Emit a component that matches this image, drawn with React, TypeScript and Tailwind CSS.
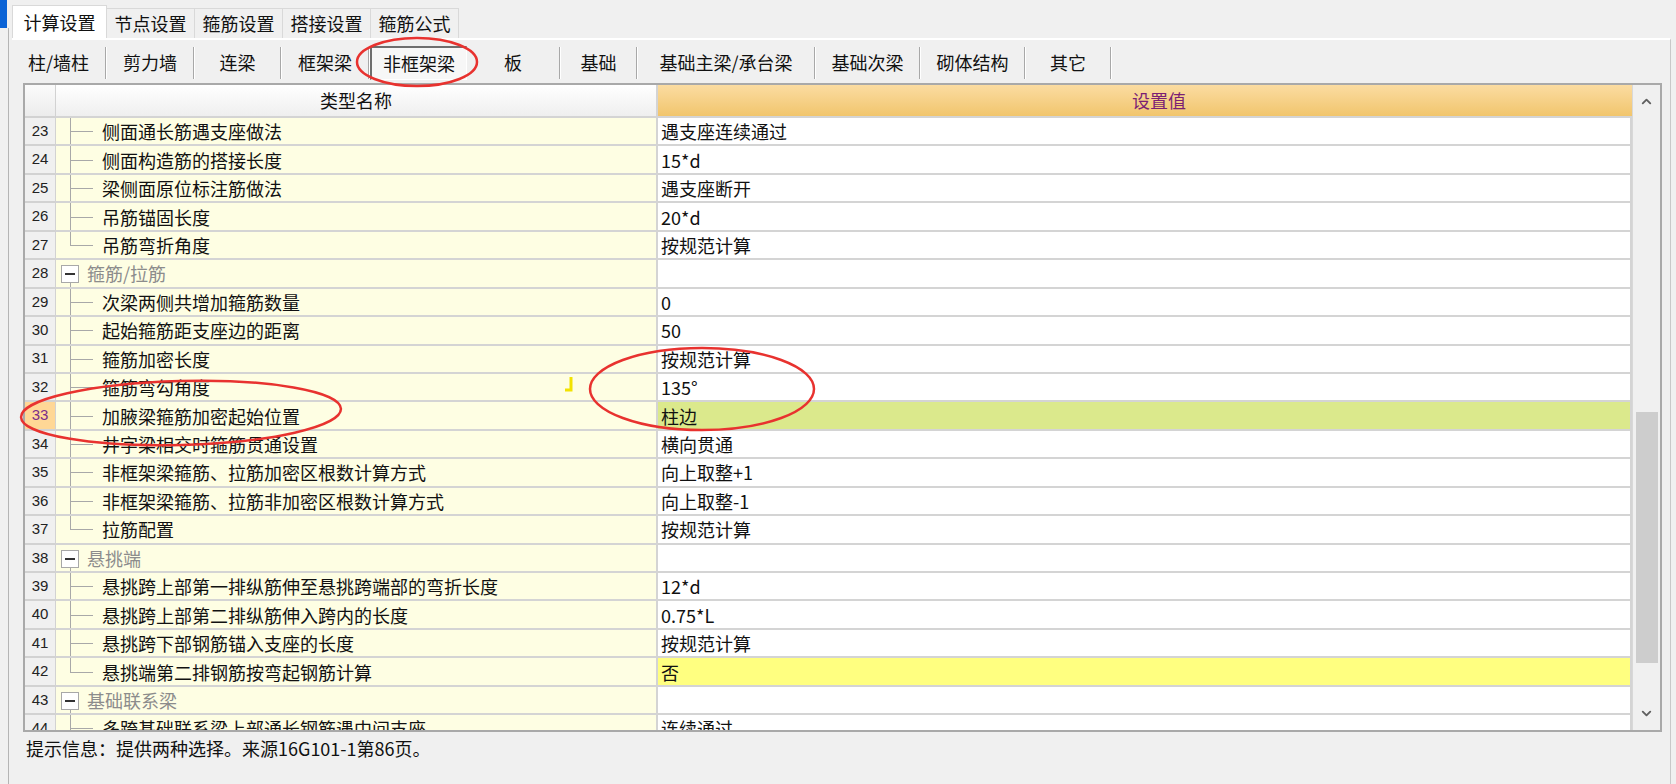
import { ChevronUp, ChevronDown } from "lucide-react";

type Row = {
  n: number;
  name: string;
  value?: string;
  group?: boolean;
  last?: boolean;
  tone?: "green" | "yellow";
  current?: boolean;
};

const rows: Row[] = [
  { n: 23, name: "侧面通长筋遇支座做法", value: "遇支座连续通过" },
  { n: 24, name: "侧面构造筋的搭接长度", value: "15*d" },
  { n: 25, name: "梁侧面原位标注筋做法", value: "遇支座断开" },
  { n: 26, name: "吊筋锚固长度", value: "20*d" },
  { n: 27, name: "吊筋弯折角度", value: "按规范计算", last: true },
  { n: 28, name: "箍筋/拉筋", group: true },
  { n: 29, name: "次梁两侧共增加箍筋数量", value: "0" },
  { n: 30, name: "起始箍筋距支座边的距离", value: "50" },
  { n: 31, name: "箍筋加密长度", value: "按规范计算" },
  { n: 32, name: "箍筋弯勾角度", value: "135°" },
  { n: 33, name: "加腋梁箍筋加密起始位置", value: "柱边", tone: "green", current: true },
  { n: 34, name: "井字梁相交时箍筋贯通设置", value: "横向贯通" },
  { n: 35, name: "非框架梁箍筋、拉筋加密区根数计算方式", value: "向上取整+1" },
  { n: 36, name: "非框架梁箍筋、拉筋非加密区根数计算方式", value: "向上取整-1" },
  { n: 37, name: "拉筋配置", value: "按规范计算", last: true },
  { n: 38, name: "悬挑端", group: true },
  { n: 39, name: "悬挑跨上部第一排纵筋伸至悬挑跨端部的弯折长度", value: "12*d" },
  { n: 40, name: "悬挑跨上部第二排纵筋伸入跨内的长度", value: "0.75*L" },
  { n: 41, name: "悬挑跨下部钢筋锚入支座的长度", value: "按规范计算" },
  { n: 42, name: "悬挑端第二排钢筋按弯起钢筋计算", value: "否", tone: "yellow", last: true },
  { n: 43, name: "基础联系梁", group: true },
  { n: 44, name: "多跨基础联系梁上部通长钢筋遇中间支座", value: "连续通过" },
];

const subTabs = [
  { label: "柱/墙柱", w: "w-[95px]" },
  { label: "剪力墙", w: "w-[88px]" },
  { label: "连梁", w: "w-[87px]" },
  { label: "框架梁", w: "w-[88px]" },
  { label: "非框架梁", w: "w-[97px]", active: true },
  { label: "板", w: "w-[94px]" },
  { label: "基础", w: "w-[77px]" },
  { label: "基础主梁/承台梁", w: "w-[178px]" },
  { label: "基础次梁", w: "w-[105px]" },
  { label: "砌体结构", w: "w-[105px]" },
  { label: "其它", w: "w-[86px]" },
];

function TreeLines({ row }: { row: Row }) {
  if (row.group) {
    return (
      <div className="relative w-[31px] h-full shrink-0">
        <div className="absolute left-[5px] top-[5px] w-[18px] h-[18px] border border-[#a8a8a8] bg-white flex items-center justify-center">
          <div className="w-[10px] h-[2px] bg-[#333]" />
        </div>
        <div className="absolute left-[14px] top-[23px] bottom-0 w-px bg-[#a8a8a8]" />
      </div>
    );
  }
  return (
    <div className="relative w-[46px] h-full shrink-0">
      <div className={`absolute left-[14px] top-0 w-px bg-[#a8a8a8] ${row.last ? "h-1/2" : "h-full"}`} />
      <div className="absolute left-[14px] top-1/2 w-[23px] h-px bg-[#a8a8a8]" />
    </div>
  );
}

function GridRow({ row }: { row: Row }) {
  const valueBg =
    row.tone === "green" ? "bg-[#dbe98c]" : row.tone === "yellow" ? "bg-[#ffff80]" : "bg-white";
  return (
    <div className="flex h-[28.45px] shrink-0">
      <div
        className={`w-[31px] shrink-0 flex items-center justify-center border-b-2 border-r border-[#d2d2d2] font-['Liberation_Sans',sans-serif] text-[15px] ${
          row.current ? "bg-[#ffd796] text-[#7a2d8a]" : "bg-[#f0f0f0] text-[#222]"
        }`}
      >
        {row.n}
      </div>
      <div className="w-[602px] shrink-0 flex items-center bg-[#fefee3] border-b-2 border-r-2 border-[#d4d4d4]">
        <TreeLines row={row} />
        <span className={`leading-[20px] whitespace-nowrap ${row.group ? "text-[#8c8c8c]" : "text-[#111]"}`}>
          {row.name}
        </span>
      </div>
      <div className={`w-[974px] shrink-0 flex items-center pl-[3px] border-b-2 border-r-2 border-[#d4d4d4] ${valueBg}`}>
        <span className="leading-[20px] whitespace-nowrap text-[#111]">{row.value}</span>
      </div>
    </div>
  );
}

export default function App() {
  return (
    <div className="relative w-[1676px] h-[784px] overflow-hidden bg-[#f0f0f0] flex font-['Noto_Sans_CJK_SC','Noto_Sans',sans-serif] text-[18px] text-[#111]">
      {/* left edge */}
      <div className="w-[12px] shrink-0 flex flex-col">
        <div className="w-[7px] h-[28px] bg-[#0a63d6]" />
        <div className="flex-1 w-[9px] border-r border-[#b4b4b4]" />
      </div>

      {/* main */}
      <div className="flex-1 flex flex-col mr-[5px]">
        {/* top tabs */}
        <div className="h-[38px] flex items-end shrink-0">
          <div className="h-[33px] w-[95px] bg-white border border-b-0 border-[#d9d9d9] flex items-center justify-center">
            计算设置
          </div>
          {["节点设置", "箍筋设置", "搭接设置", "箍筋公式"].map((t) => (
            <div
              key={t}
              className="h-[30px] w-[89px] -ml-px bg-[#f0f0f0] border border-b-0 border-[#d9d9d9] flex items-center justify-center"
            >
              {t}
            </div>
          ))}
        </div>

        {/* panel */}
        <div className="flex-1 flex flex-col border-t-2 border-t-white border-r border-r-[#c8c8c8] bg-[#f0f0f0]">
          {/* sub tabs */}
          <div className="h-[43px] flex items-center shrink-0 pt-[2px]">
            {subTabs.map((s) =>
              s.active ? (
                <div
                  key={s.label}
                  className={`${s.w} h-[34px] flex items-center justify-center border-t-2 border-l-2 border-[#6e6e6e] border-r border-b border-r-white border-b-white bg-[#f7f7f7]`}
                >
                  {s.label}
                </div>
              ) : (
                <div key={s.label} className={`${s.w} h-[34px] flex items-center`}>
                  <span className="flex-1 text-center">{s.label}</span>
                  <span className="w-[2px] h-[32px] border-l border-[#a8a8a8] border-r border-r-white" />
                </div>
              )
            )}
          </div>

          {/* grid frame */}
          <div className="ml-[11px] w-[1639px] h-[649px] flex border-2 border-[#a9a9a9] bg-white shrink-0">
            <div className="flex-1 flex flex-col overflow-hidden">
              {/* header */}
              <div className="flex h-[33px] shrink-0">
                <div className="w-[31px] shrink-0 bg-gradient-to-b from-[#fbfbfb] to-[#ececec] border-b-2 border-r border-[#d2d2d2]" />
                <div className="w-[602px] shrink-0 flex items-center justify-center bg-gradient-to-b from-[#ffffff] to-[#efefef] border-b-2 border-r-2 border-[#d4d4d4]">
                  类型名称
                </div>
                <div className="w-[974px] shrink-0 flex items-center justify-center pl-[28px] bg-gradient-to-b from-[#fbdca1] to-[#f1c56c] border-b-2 border-[#d4d4d4] text-[#7b1f74]">
                  设置值
                </div>
              </div>
              {rows.map((r) => (
                <GridRow key={r.n} row={r} />
              ))}
            </div>

            {/* scrollbar */}
            <div className="w-[28px] shrink-0 flex flex-col bg-[#f0f0f0] border-l border-[#d8d8d8]">
              <div className="h-[33px] flex items-center justify-center text-[#606060]">
                <ChevronUp size={15} strokeWidth={3} />
              </div>
              <div className="h-[294px]" />
              <div className="h-[251px] ml-[3px] mr-[2px] bg-[#cdcdcd]" />
              <div className="flex-1" />
              <div className="h-[33px] flex items-center justify-center text-[#606060]">
                <ChevronDown size={15} strokeWidth={3} />
              </div>
            </div>
          </div>

          {/* status */}
          <div className="pl-[14px] pt-[5px] leading-[22px] whitespace-nowrap">
            提示信息：提供两种选择。来源16G101-1第86页。
          </div>
        </div>
      </div>

      {/* annotations drawn over the screenshot */}
      <svg className="absolute inset-0 pointer-events-none" width="1676" height="784">
        <ellipse cx="417" cy="62" rx="60" ry="24" fill="none" stroke="#e8322f" strokeWidth="2.5" />
        <ellipse cx="181" cy="413" rx="160" ry="32" fill="none" stroke="#e8322f" strokeWidth="2.5" transform="rotate(-1.5 181 413)" />
        <ellipse cx="702" cy="389" rx="112" ry="41" fill="none" stroke="#e8322f" strokeWidth="2.5" />
        <path d="M571 377 V390 H565" fill="none" stroke="#f2e200" strokeWidth="3" />
      </svg>
    </div>
  );
}
